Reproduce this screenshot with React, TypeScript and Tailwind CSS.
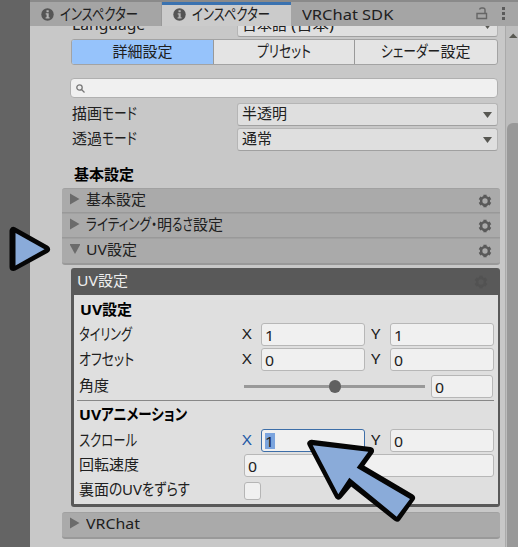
import { useLayoutEffect, useRef, useState, type ReactNode } from 'react';

type Part = string | [text: string, width: number];

// Squeezes a run of text into a given width (narrow UI kana)
function Fit({ text, width }: { text: string; width: number }) {
  const ref = useRef<HTMLSpanElement>(null);
  const [scale, setScale] = useState(1);

  useLayoutEffect(() => {
    if (ref.current) setScale(width / ref.current.offsetWidth);
  }, [text, width]);

  return (
    <span className="inline-block whitespace-nowrap" style={{ width }}>
      <span ref={ref} className="inline-block origin-left" style={{ transform: `scaleX(${scale})` }}>
        {text}
      </span>
    </span>
  );
}

const isKana = (text: string) => /[\u3040-\u30ff]/.test(text);

function Label({ parts, className = '' }: { parts: Part[]; className?: string }) {
  return (
    <span className={`inline-flex items-center whitespace-nowrap ${className}`}>
      {parts.map((p, i) =>
        typeof p === 'string' ? (
          <span key={i}>{p}</span>
        ) : (
          <span key={i} className={isKana(p[0]) ? 'text-[16px]' : ''}>
            <Fit text={p[0]} width={p[1]} />
          </span>
        )
      )}
    </span>
  );
}

function Gear({ className }: { className: string }) {
  return (
    <svg width="14" height="14" viewBox="-7 -7 14 14" className={className} fill="none" stroke="currentColor">
      <circle r="3.900" strokeWidth="2.500" />
      <path d="M0-4.500V-6.300M0 4.500V6.300" strokeWidth="3.200" />
      <path d="M0-4.500V-6.300M0 4.500V6.300" strokeWidth="3.200" transform="rotate(60)" />
      <path d="M0-4.500V-6.300M0 4.500V6.300" strokeWidth="3.200" transform="rotate(120)" />
    </svg>
  );
}

function InfoIcon() {
  return (
    <svg width="13" height="13" viewBox="0 0 13 13">
      <circle cx="6.500" cy="6.500" r="6.200" fill="#555" />
      <path d="M5.500 2.200h2.200v2H5.500zM4.700 5.300h3v4h.9v1.300H4.600V9.300h1V6.500h-.9z" fill="#b4b4b4" />
    </svg>
  );
}

function Dropdown({ parts }: { parts: Part[] }) {
  return (
    <div className="flex h-[23px] w-[261px] shrink-0 items-center justify-between rounded-[3px] border border-[#b5b5b5] border-b-[#a0a0a0] bg-[#dfdfdf] pr-[5px] pl-1">
      <Label parts={parts} className="-mt-[3px]" />
      <svg width="9" height="6" viewBox="0 0 9 6">
        <path d="M0 0h9L4.500 6z" fill="#575752" />
      </svg>
    </div>
  );
}

function Field({ value, className, active }: { value: string; className: string; active?: boolean }) {
  return (
    <div
      className={`flex h-[23px] items-center rounded-[3px] border bg-[#f0f0f0] pt-[1px] pl-[3px] leading-[16px] ${
        active ? 'border-[#3d6ea8]' : 'border-[#b7b7b7]'
      } ${className}`}
    >
      <span className={active ? 'bg-[#7ba4de]' : ''}>
        <Fit text={value} width={9.5} />
      </span>
    </div>
  );
}

function VectorRow({ label, x, y, active }: { label: Part[]; x: string; y: string; active?: boolean }) {
  return (
    <div className="flex h-[25px] items-start">
      <Label parts={label} className="h-[21px] w-[163px]" />
      <span className={`h-[21px] w-[19px] leading-[21px] ${active ? 'text-[#1f5aa6]' : ''}`}>
        <Fit text="X" width={10} />
      </span>
      <Field value={x} className="w-[104px]" active={active} />
      <span className="ml-[6px] h-[21px] w-[19px] leading-[21px]">
        <Fit text="Y" width={10} />
      </span>
      <Field value={y} className="w-[104px]" />
    </div>
  );
}

function Foldout({ parts, open, gear = true, className }: { parts: Part[]; open?: boolean; gear?: boolean; className: string }) {
  return (
    <div className={`flex items-start justify-between border-t border-b border-t-[#a1a1a1] border-b-[#999] bg-[#aaa] pr-2 pl-2 ${className}`}>
      <div className="flex h-[20px] items-center">
        <svg width="10" height="12" viewBox="0 0 10 12" className="mr-[6px] -mt-[1px]">
          <path d={open ? 'M-.5 1h11L5 11z' : 'M0 .5v11L9.500 6z'} fill="#6b6b6b" />
        </svg>
        <Label parts={parts} />
      </div>
      {gear && <Gear className="mt-[5px] text-[#5a5a5a]" />}
    </div>
  );
}

function Tab({ children, active }: { children: ReactNode; active?: boolean }) {
  return (
    <div
      className={`flex h-6 items-center gap-[6px] pl-[11px] ${
        active ? 'w-[129px] border-t-3 border-[#3a72b0] bg-[#cbcbcb] pb-[3px]' : 'w-[132px] border-r border-[#999]'
      }`}
    >
      <InfoIcon />
      {children}
    </div>
  );
}

export default function App() {
  return (
    <div className="relative flex h-[547px] w-[518px] overflow-hidden bg-[#646464] pl-[30px] font-['Noto_Sans','Noto_Sans_CJK_JP',sans-serif] text-[15px] leading-[20px] text-[#202020] [font-feature-settings:'palt']">
      <div className="flex w-[488px] flex-col bg-[#c8c8c8]">
        {/* Tabs */}
        <div className="flex h-[26px] shrink-0 border-t-2 border-[#8a8a8a] bg-[#a5a5a5]">
          <Tab>
            <Label parts={[['インスペクター', 78]]} />
          </Tab>
          <Tab active>
            <Label parts={[['インスペクター', 78]]} />
          </Tab>
          <div className="flex flex-1 items-center pl-[11px]">
            <Label parts={[['VRChat SDK', 91]]} className="pb-[1px]" />
            <svg width="12" height="13" viewBox="0 0 12 13" className="mr-[14px] mb-[1px] ml-[83px]" fill="none" stroke="#666" strokeWidth="1.4">
              <path d="M1 6.500h9.500v5H1zM9 6V3Q9 1 7 1H5.500Q4 1 3.500 2.500" />
            </svg>
            <svg width="3" height="13" viewBox="0 0 3 13" className="mb-[2px]" fill="#5a5a5a">
              <path d="M0 0h3v3H0zM0 5h3v3H0zM0 10h3v3H0z" />
            </svg>
          </div>
        </div>

        <div className="flex min-h-0 flex-1">
          <div className="w-[475px] overflow-hidden pl-[32px]">
            {/* Scrolled half out of view */}
            <div className="flex h-[11px] items-end justify-between pr-[7px] pl-[10px]">
              <Label parts={[['Language', 73]]} className="mb-[3px]" />
              <Dropdown parts={['日本語', ['\u00a0(日本)', 47]]} />
            </div>

            {/* Mode buttons */}
            <div className="mt-[2px] ml-[9px] flex h-[26px] w-[427px] overflow-hidden rounded-[3px] border border-[#a3a3a3] bg-[#e4e4e4]">
              <div className="flex w-[142px] items-center justify-center border-r border-[#999] bg-[#96c3fb] pb-[2px]">
                <Label parts={['詳細設定']} />
              </div>
              <div className="flex w-[141px] items-center justify-center border-r border-[#999] pb-[2px]">
                <Label parts={[['プリセット', 54]]} />
              </div>
              <div className="flex flex-1 items-center justify-center pb-[2px]">
                <Label parts={[['シェーダー', 59], '設定']} />
              </div>
            </div>

            {/* Search */}
            <div className="mt-[13px] ml-[8px] flex h-[20px] w-[428px] items-center rounded-[4px] border border-[#b0b0b0] bg-[#f0f0f0] pl-[5px]">
              <svg width="9" height="9" viewBox="0 0 9 9" fill="none" stroke="#777" strokeWidth="1.3">
                <circle cx="3.500" cy="3.500" r="2.700" />
                <path d="M5.500 5.500 8.500 8.500" />
              </svg>
            </div>

            <div className="mt-[5px] flex h-[25px] justify-between pr-[7px] pl-[10px]">
              <Label parts={['描画', ['モード', 35]]} className="h-[20px]" />
              <Dropdown parts={['半透明']} />
            </div>
            <div className="flex h-[25px] justify-between pr-[7px] pl-[10px]">
              <Label parts={['透過', ['モード', 35]]} className="h-[20px]" />
              <Dropdown parts={['通常']} />
            </div>

            <div className="mt-[9px] flex h-[26px] items-center pb-[2px] pl-[12px] font-bold text-black">基本設定</div>

            <div className="w-[438px]">
              <Foldout parts={['基本設定']} className="h-[25px] rounded-t-[3px]" />
              <Foldout parts={[['ライティング・', 71], '明', ['るさ', 21], '設定']} className="h-[25px]" />
              <Foldout parts={[['UV', 21], '設定']} open className="h-[27px] rounded-b-[3px] border-b-2" />
            </div>

            {/* UV group */}
            <div className="mt-[3px] ml-[9px] h-[239px] w-[429px] rounded-[3px] bg-[#595959] pr-[2px] pl-[3px]">
              <div className="flex h-[27px] items-center justify-between pr-[10px] pb-[3px] pl-[3px] text-[#ededed]">
                <Label parts={[['UV', 21], '設定']} />
                <Gear className="mt-[3px] text-[#525252]" />
              </div>
              <div className="h-[209px] bg-[#dfdfdf] pl-[5px]">
                <Label parts={[['UV', 22], '設定']} className="mt-[3px] h-[21px] pl-[1px] font-bold text-black" />
                <div className="mt-[4px]">
                  <VectorRow label={[['タイリング', 53]]} x="1" y="1" />
                  <VectorRow label={[['オフセット', 55]]} x="0" y="0" />
                </div>
                <div className="mt-[2px] flex h-[25px]">
                  <Label parts={['角度']} className="h-[20px] w-[165px]" />
                  <div className="mt-[5px] flex h-[13px] w-[181px] items-center justify-center">
                    <div className="h-[3px] flex-1 bg-[#999]" />
                    <div className="h-[13px] w-[12px] rounded-full bg-[#606060]" />
                    <div className="h-[3px] flex-1 bg-[#999]" />
                  </div>
                  <Field value="0" className="ml-[6px] w-[62px]" />
                </div>
                <div className="-ml-[2px] h-[1px] w-[417px] bg-[#888]" />
                <Label parts={[['UV', 22], ['アニメーション', 86]]} className="mt-[2px] h-[21px] font-bold text-black" />
                <div className="mt-[5px]">
                  <VectorRow label={[['スクロール', 58]]} x="1" y="0" active />
                </div>
                <div className="flex h-[25px]">
                  <Label parts={['回転速度']} className="h-[20px] w-[165px]" />
                  <Field value="0" className="w-[250px]" />
                </div>
                <div className="flex h-[25px]">
                  <Label parts={['裏面', ['の', 13], ['UV', 20], ['をずらす', 48]]} className="h-[20px] w-[165px]" />
                  <div className="mt-[3px] h-[18px] w-[17px] rounded-[3px] border border-[#b5b5b5] bg-[#f0f0f0]" />
                </div>
              </div>
            </div>

            <div className="mt-[5px] w-[438px]">
              <Foldout parts={[['VRChat', 54]]} gear={false} className="h-[27px] rounded-[3px] border-b-2" />
            </div>
          </div>

          {/* Scrollbar */}
          <div className="flex w-[13px] flex-col border-l border-[#aaa] bg-[#bdbdbd] pl-[1px]">
            <svg width="11" height="97" viewBox="0 0 11 97">
              <path d="M2 12h8.500L6.200 7.500z" fill="#595952" />
            </svg>
            <div className="w-[15px] flex-1 rounded-t-[6px] bg-[#999]" />
          </div>
        </div>
      </div>

      {/* Callout arrows: round black outline, then the sharp fill */}
      <svg className="absolute inset-0" width="518" height="547" viewBox="0 0 518 547">
        <g fill="#050505" stroke="#050505" strokeWidth="8" strokeLinejoin="round">
          <path d="M13.500 231v36L46 249.200z" />
          <path d="M311.300 443.700 370 451 358.500 467 411 498 397 517.600 350.800 481 338.500 495.500z" />
        </g>
        <g fill="#8aabd9">
          <path d="M15.500 233v32.500L44.500 249.200z" />
          <path d="M312.700 445.300 368.300 451.700 356.700 467.700 410 499 396.700 516.700 349.300 477.700 338.300 494.300z" />
        </g>
      </svg>
    </div>
  );
}
